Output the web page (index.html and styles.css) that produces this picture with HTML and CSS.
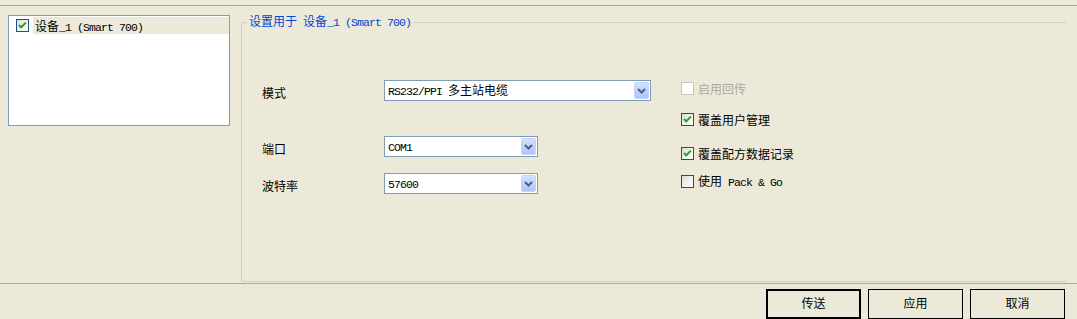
FILE: index.html
```html
<!DOCTYPE html>
<html lang="zh">
<head>
<meta charset="utf-8">
<title>设备设置</title>
<link rel="stylesheet" href="styles.css">
</head>
<body>
<div class="rule"></div>
<div class="main">
  <div class="list">
    <div class="list-row">
      <span class="cb checked"><svg viewBox="0 0 13 13" width="13" height="13"><path d="M3 6 L5.2 8.4 L9.8 3.6" fill="none" stroke="#21A121" stroke-width="2"/></svg></span>
      <span class="list-label">设备<span class="m">_1 (Smart 700)</span></span>
    </div>
  </div>
  <div class="group">
    <div class="group-title">设置用于<span class="m"> </span>设备<span class="m">_1 (Smart 700)</span></div>
    <div class="group-body">
      <div class="fields">
        <div class="field f1">
          <div class="label">模式</div>
          <div class="combo wide"><span class="combo-text"><span class="m">RS232/PPI </span>多主站电缆</span><span class="combo-btn"><svg viewBox="0 0 15 17" width="15" height="17"><path d="M4 7 L7.5 10.5 L11 7" fill="none" stroke="#4D6185" stroke-width="2"/></svg></span></div>
        </div>
        <div class="field f2">
          <div class="label">端口</div>
          <div class="combo"><span class="combo-text"><span class="m">COM1</span></span><span class="combo-btn"><svg viewBox="0 0 15 17" width="15" height="17"><path d="M4 7 L7.5 10.5 L11 7" fill="none" stroke="#4D6185" stroke-width="2"/></svg></span></div>
        </div>
        <div class="field f3">
          <div class="label">波特率</div>
          <div class="combo"><span class="combo-text"><span class="m">57600</span></span><span class="combo-btn"><svg viewBox="0 0 15 17" width="15" height="17"><path d="M4 7 L7.5 10.5 L11 7" fill="none" stroke="#4D6185" stroke-width="2"/></svg></span></div>
        </div>
      </div>
      <div class="options">
        <div class="opt o1 disabled"><span class="cb off"></span><span class="opt-text">启用回传</span></div>
        <div class="opt o2"><span class="cb checked"><svg viewBox="0 0 13 13" width="13" height="13"><path d="M3 6 L5.2 8.4 L9.8 3.6" fill="none" stroke="#21A121" stroke-width="2"/></svg></span><span class="opt-text">覆盖用户管理</span></div>
        <div class="opt o3"><span class="cb checked"><svg viewBox="0 0 13 13" width="13" height="13"><path d="M3 6 L5.2 8.4 L9.8 3.6" fill="none" stroke="#21A121" stroke-width="2"/></svg></span><span class="opt-text">覆盖配方数据记录</span></div>
        <div class="opt o4"><span class="cb"></span><span class="opt-text">使用<span class="m"> Pack &amp; Go</span></span></div>
      </div>
    </div>
  </div>
</div>
<div class="rule"></div>
<div class="buttons">
  <div class="btn default">传送</div>
  <div class="btn">应用</div>
  <div class="btn">取消</div>
</div>
</body>
</html>
```

FILE: styles.css
```css
html, body {
  margin: 0;
  padding: 0;
}
body {
  width: 1077px;
  height: 319px;
  overflow: hidden;
  background: #ECE9D8;
  color: #000;
  font-family: "Noto Sans CJK SC", "Liberation Sans", sans-serif;
  font-size: 12px;
  line-height: 14px;
}
.m {
  font-family: "Liberation Mono", "DejaVu Sans Mono", monospace;
  font-size: 11.5px;
  letter-spacing: -0.9px;
  white-space: pre;
}
.rule {
  height: 1px;
  background: #ACA899;
}
body > .rule:first-child {
  margin-top: 5px;
}
.main {
  display: flex;
  height: 277px;
}
.list {
  box-sizing: border-box;
  margin: 9px 0 0 8px;
  width: 222px;
  height: 111px;
  border: 1px solid #7F9DB9;
  background: #fff;
  padding-top: 1px;
}
.list-row {
  display: flex;
  align-items: center;
  height: 17px;
  padding-left: 7px;
}
.list-label {
  flex: 1;
  margin-left: 4px;
  height: 17px;
  line-height: 17px;
  padding-left: 2px;
  background: #ECE9D8;
  white-space: nowrap;
}
.cb {
  box-sizing: border-box;
  display: block;
  flex: none;
  width: 13px;
  height: 13px;
  border: 1px solid #1C5180;
  background: linear-gradient(135deg, #DCDCD7 0%, #F4F4F0 60%, #FFFFFF 100%);
}
.cb svg {
  display: block;
  margin: -1px 0 0 -1px;
}
.cb.off {
  border-color: #CAC8BB;
  background: #FFFFFF;
}
.group {
  box-sizing: border-box;
  margin: 16px 0 0 11px;
  width: 825px;
  height: 260px;
  border: 1px solid #D0D0BF;
  border-right: none;
  border-radius: 3px 0 0 3px;
}
.group-title {
  width: fit-content;
  margin: -9px 0 0 5px;
  padding: 0 2px;
  height: 14px;
  line-height: 14px;
  background: #ECE9D8;
  color: #0046D5;
  white-space: nowrap;
}
.group-body {
  display: flex;
  padding-left: 20px;
}
.fields {
  width: 389px;
}
.field {
  display: flex;
  height: 21px;
}
.f1 { margin-top: 52px; }
.f2 { margin-top: 35px; }
.f3 { margin-top: 16px; }
.label {
  width: 122px;
  flex: none;
  height: 21px;
  line-height: 25px;
  white-space: nowrap;
}
.combo {
  box-sizing: border-box;
  display: flex;
  align-items: center;
  width: 154px;
  height: 21px;
  border: 1px solid #7F9DB9;
  background: #fff;
}
.combo.wide {
  width: 267px;
}
.combo-text {
  flex: 1;
  padding-left: 3px;
  line-height: 19px;
  white-space: nowrap;
  overflow: hidden;
}
.combo-btn {
  box-sizing: border-box;
  flex: none;
  width: 15px;
  height: 17px;
  margin-right: 1px;
  border: 1px solid #C3D3FD;
  border-radius: 2px;
  background: linear-gradient(180deg, #D6E1FD 0%, #C0D1FA 50%, #B2C6F6 100%);
}
.combo-btn svg {
  display: block;
  margin: -1px 0 0 -1px;
}
.options {
  margin-left: 30px;
}
.opt {
  display: flex;
  align-items: center;
  height: 13px;
  white-space: nowrap;
}
.o1 { margin-top: 54px; }
.o2 { margin-top: 18px; }
.o3 { margin-top: 21px; }
.o4 { margin-top: 15px; }
.opt-text {
  margin-left: 4px;
  line-height: 13px;
}
.opt.disabled .opt-text {
  color: #ACA899;
}
.buttons {
  display: flex;
  justify-content: flex-end;
  gap: 7px;
  padding-right: 12px;
  margin-top: 5px;
}
.btn {
  box-sizing: border-box;
  width: 95px;
  height: 30px;
  border: 1px solid #000;
  background: #ECE9D8;
  display: flex;
  align-items: center;
  justify-content: center;
  padding-bottom: 2px;
}
.btn.default {
  border-width: 2px;
}
```
